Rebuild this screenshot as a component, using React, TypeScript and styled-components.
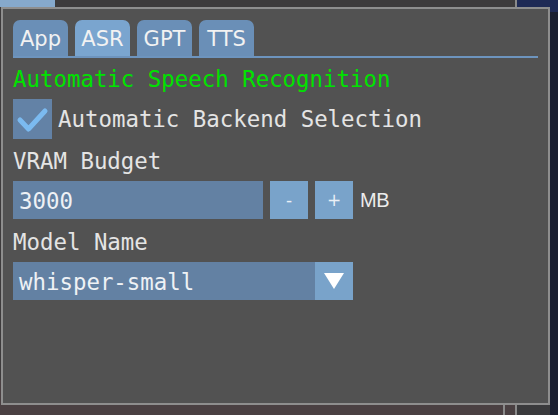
import { useState } from "react";
import styled, { createGlobalStyle } from "styled-components";

const GlobalStyle = createGlobalStyle`
  html, body {
    margin: 0;
    padding: 0;
    width: 558px;
    height: 415px;
    overflow: hidden;
  }
  body {
    background:
      linear-gradient(to right, #86a9cc 0 55px, transparent 55px) top left / 100% 7px no-repeat,
      linear-gradient(to right, transparent 515px, #8a8a8a 515px 517px, #1e2a55 517px) top left / 100% 12px no-repeat,
      linear-gradient(to right, transparent 550px, #1a1f30 550px) top left / 100% 100% no-repeat,
      linear-gradient(to right, transparent 503px, #8a8a8a 503px 505px, transparent 505px 515px, #8a8a8a 515px 517px, #3a3a3c 517px) bottom left / 100% 10px no-repeat,
      linear-gradient(to bottom, #3d3b3c 0 380px, #4a4042 380px);
  }
`;

const Panel = styled.div`
  box-sizing: border-box;
  margin: 7px 0 0 1px;
  width: 549px;
  height: 398px;
  border: 2px solid #8e8e8e;
  background: #525252;
  padding: 11px 10px 0 10px;
  display: flex;
  flex-direction: column;
  font-family: "DejaVu Sans Mono", "Liberation Mono", monospace;
  font-size: 22.4px;
  line-height: 26px;
  color: #e4e4e4;
`;

const TabBar = styled.div`
  display: flex;
  gap: 7px;
  border-bottom: 2px solid #6d94be;
`;

const Tab = styled.div<{ $active?: boolean }>`
  box-sizing: border-box;
  width: 55px;
  height: 36px;
  padding-top: 8px;
  border-radius: 7px 7px 0 0;
  background: ${({ $active }) => ($active ? "#7aa5cf" : "#6a8fb7")};
  color: #f2f2f2;
  font-family: "DejaVu Sans", "Liberation Sans", sans-serif;
  font-size: 21px;
  line-height: 22px;
  text-align: center;
  cursor: pointer;
`;

const Heading = styled.div`
  margin-top: 8px;
  color: #00e300;
`;

const CheckRow = styled.label`
  margin-top: 7px;
  display: flex;
  align-items: center;
  gap: 6px;
  height: 40px;
  cursor: pointer;
`;

const CheckBox = styled.div`
  width: 39px;
  height: 40px;
  background: #6382a6;
  display: flex;
  align-items: center;
  justify-content: center;
`;

const Label = styled.div<{ $top: number }>`
  margin-top: ${({ $top }) => $top}px;
`;

const Row = styled.div`
  margin-top: 7px;
  display: flex;
  align-items: center;
  gap: 7px;
  height: 38px;
`;

const Field = styled.div<{ $width: number }>`
  box-sizing: border-box;
  width: ${({ $width }) => $width}px;
  height: 38px;
  padding: 1px 0 0 6px;
  background: #6381a3;
  display: flex;
  align-items: center;
  color: #eef1f5;
`;

const StepButton = styled.button`
  box-sizing: border-box;
  width: 38px;
  height: 38px;
  border: none;
  padding: 0;
  background: #79a3ca;
  color: #eaf0f6;
  font-family: "DejaVu Sans", sans-serif;
  font-size: 17px;
  cursor: pointer;
`;

const Unit = styled.span`
  font-family: "Liberation Sans", Arial, sans-serif;
  font-size: 20px;
  letter-spacing: -0.5px;
  color: #ececec;
`;

const Select = styled.div`
  display: flex;
  width: 340px;
  height: 38px;
`;

const SelectArrow = styled.div`
  width: 38px;
  height: 38px;
  background: #79a3ca;
  display: flex;
  align-items: center;
  justify-content: center;
`;

export default function App() {
  const [tab, setTab] = useState("ASR");
  const [auto, setAuto] = useState(true);
  const [vram, setVram] = useState(3000);

  return (
    <>
      <GlobalStyle />
      <Panel>
        <TabBar>
          {["App", "ASR", "GPT", "TTS"].map((t) => (
            <Tab key={t} $active={t === tab} onClick={() => setTab(t)}>
              {t}
            </Tab>
          ))}
        </TabBar>

        <Heading>Automatic Speech Recognition</Heading>

        <CheckRow onClick={() => setAuto(!auto)}>
          <CheckBox>
            {auto && (
              <svg width="39" height="40" viewBox="0 0 39 40">
                <path
                  d="M7 21 L15.5 30 L32 12"
                  fill="none"
                  stroke="#7bbaf0"
                  strokeWidth="5"
                  strokeLinecap="round"
                  strokeLinejoin="round"
                />
              </svg>
            )}
          </CheckBox>
          Automatic Backend Selection
        </CheckRow>

        <Label $top={9}>VRAM Budget</Label>
        <Row>
          <Field $width={250}>{vram}</Field>
          <StepButton onClick={() => setVram(vram - 100)}>-</StepButton>
          <StepButton onClick={() => setVram(vram + 100)}>+</StepButton>
          <Unit>MB</Unit>
        </Row>

        <Label $top={10}>Model Name</Label>
        <Row>
          <Select>
            <Field $width={302}>whisper-small</Field>
            <SelectArrow>
              <svg width="20" height="16" viewBox="0 0 20 16">
                <path d="M0 0 H20 L10 16 Z" fill="#ffffff" />
              </svg>
            </SelectArrow>
          </Select>
        </Row>
      </Panel>
    </>
  );
}
